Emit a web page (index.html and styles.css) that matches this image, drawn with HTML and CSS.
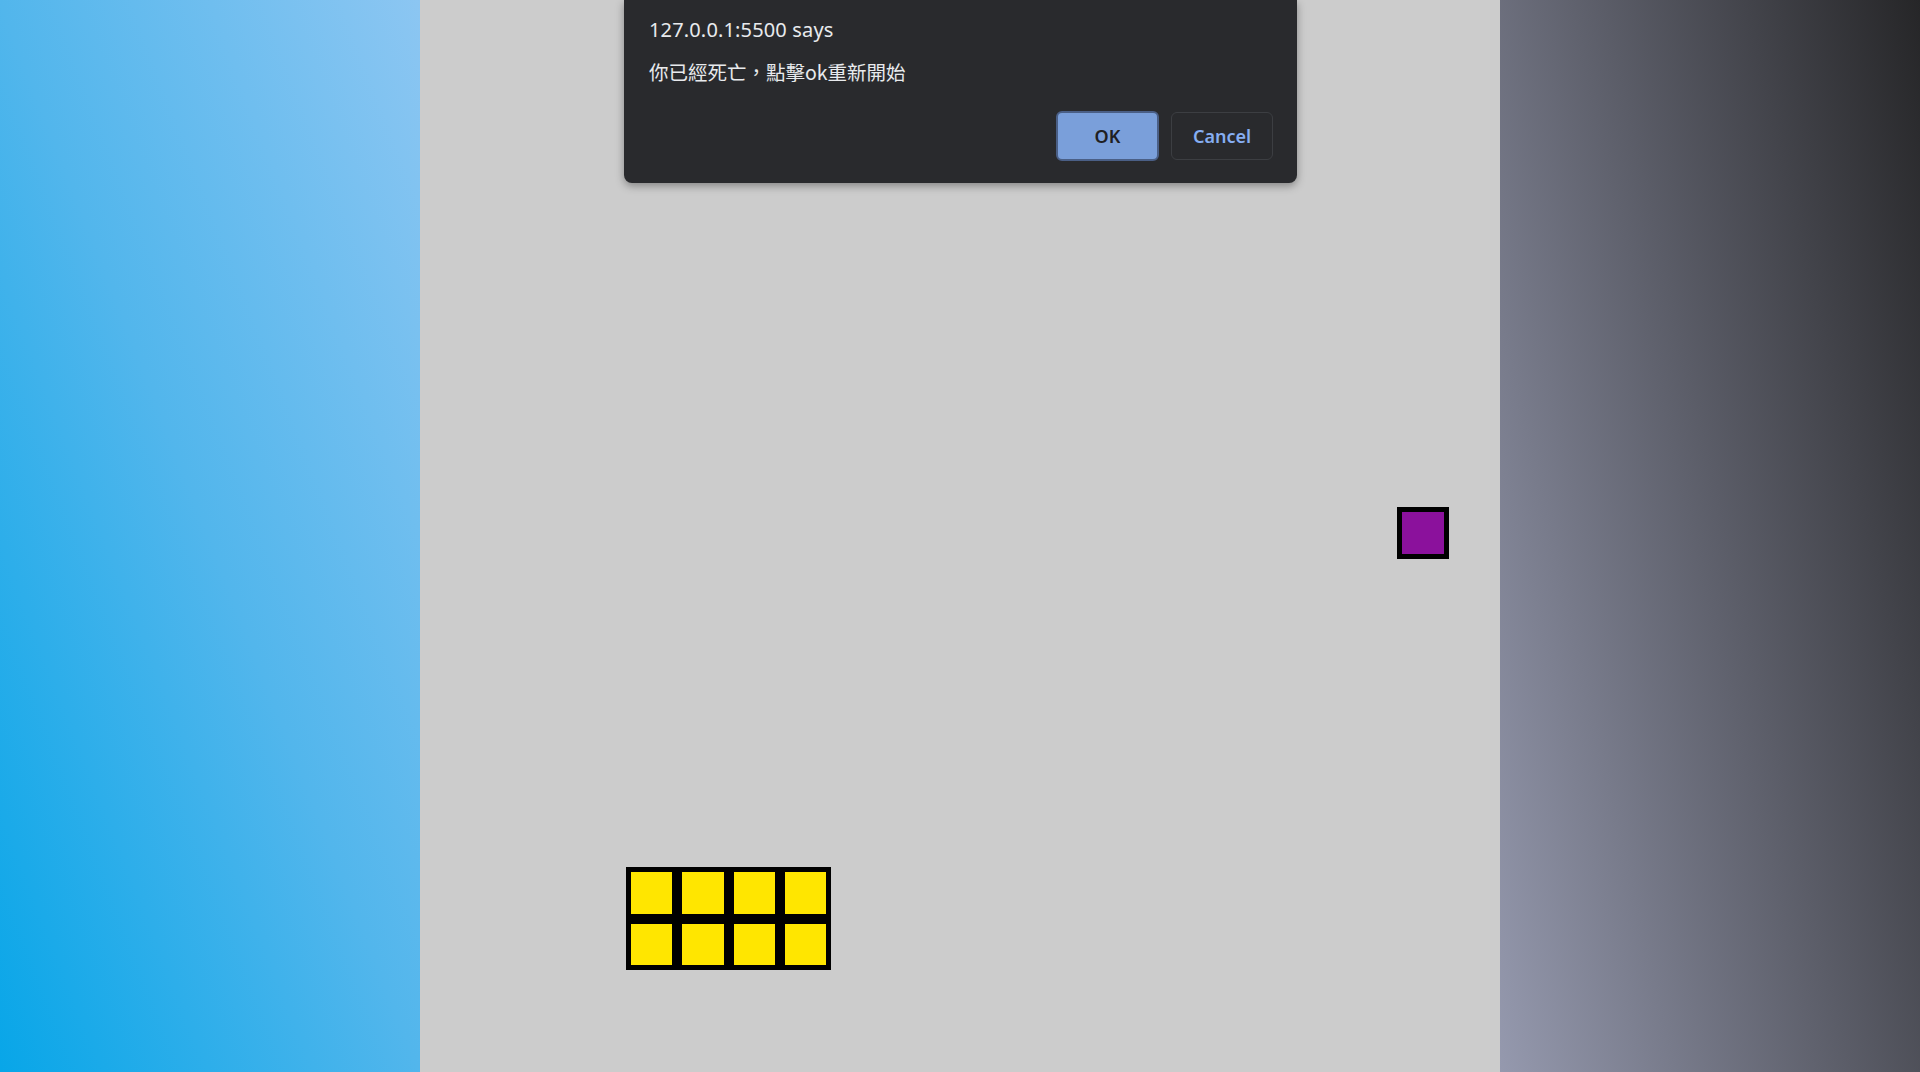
FILE: index.html
```html
<!DOCTYPE html>
<html lang="zh-Hant">
<head>
<meta charset="utf-8">
<title>Tetris</title>
<link rel="stylesheet" href="styles.css">
</head>
<body>
<div class="page">
  <aside class="side side-left"></aside>
  <main class="board">
    <div class="piece piece-o">
      <div class="cell yellow"></div><div class="cell yellow"></div><div class="cell yellow"></div><div class="cell yellow"></div>
      <div class="cell yellow"></div><div class="cell yellow"></div><div class="cell yellow"></div><div class="cell yellow"></div>
    </div>
    <div class="piece piece-dot">
      <div class="cell purple"></div>
    </div>
  </main>
  <aside class="side side-right"></aside>
</div>
<div class="dialog" role="alertdialog">
  <div class="dialog-title">127.0.0.1:5500 says</div>
  <div class="dialog-msg">你已經死亡<span class="punct">，</span>點擊ok重新開始</div>
  <div class="dialog-actions">
    <button class="btn btn-ok">OK</button>
    <button class="btn btn-cancel">Cancel</button>
  </div>
</div>
</body>
</html>
```
FILE: styles.css
```css
html, body {
  margin: 0;
  padding: 0;
  height: 100%;
  overflow: hidden;
}
body {
  font-family: "Noto Sans", "Noto Sans CJK TC", sans-serif;
}
.page {
  display: flex;
  height: 1072px;
  width: 1920px;
}
.side {
  width: 420px;
  flex: none;
}
.side-left {
  background: linear-gradient(to top right, #08a6e8 0%, #52b6ec 50%, #8cc6f2 100%);
}
.side-right {
  background: linear-gradient(77deg, #9599ae 0%, #262628 100%);
}
.board {
  flex: 1;
  background: #cccccc;
  position: relative;
}
.piece {
  position: absolute;
  display: grid;
  grid-auto-rows: 51.43px;
}
.piece-o {
  left: 205.7px;
  top: 867.1px;
  grid-template-columns: repeat(4, 51.43px);
}
.piece-dot {
  left: 977.1px;
  top: 507.1px;
  grid-template-columns: 51.43px;
}
.cell {
  box-sizing: border-box;
  border: 5px solid #000;
}
.yellow { background: #ffe600; }
.purple { background: #8b119c; }

.dialog {
  position: absolute;
  top: 0;
  left: 624px;
  width: 673px;
  height: 183px;
  box-sizing: border-box;
  background: #292a2d;
  border-radius: 0 0 8px 8px;
  box-shadow: 0 3px 8px rgba(0, 0, 0, 0.35);
  padding: 15px 24px 0 25px;
  display: flex;
  flex-direction: column;
  color: #e8eaed;
}
.dialog-title {
  font-family: "Noto Sans", sans-serif;
  font-size: 20px;
  line-height: 30px;
  letter-spacing: 0.15px;
}
.dialog-msg {
  font-family: "Noto Sans CJK TC", "Noto Sans", sans-serif;
  font-size: 19.5px;
  line-height: 24px;
  margin-top: 15px;
}
.punct {
  font-family: "Noto Sans CJK SC", sans-serif;
}
.dialog-actions {
  display: flex;
  justify-content: flex-end;
  align-items: center;
  gap: 12px;
  margin-top: 27px;
}
.btn {
  box-sizing: border-box;
  font-family: "Noto Sans", sans-serif;
  font-size: 18px;
  font-weight: 600;
  border-radius: 6px;
  cursor: pointer;
  padding: 0;
}
.btn-ok {
  width: 103px;
  height: 50px;
  background: #7a9fda;
  color: #1f2023;
  border: 2px solid #4a5f86;
}
.btn-cancel {
  width: 102px;
  height: 48px;
  background: transparent;
  color: #86aef2;
  border: 1px solid #3c3e42;
}
```
